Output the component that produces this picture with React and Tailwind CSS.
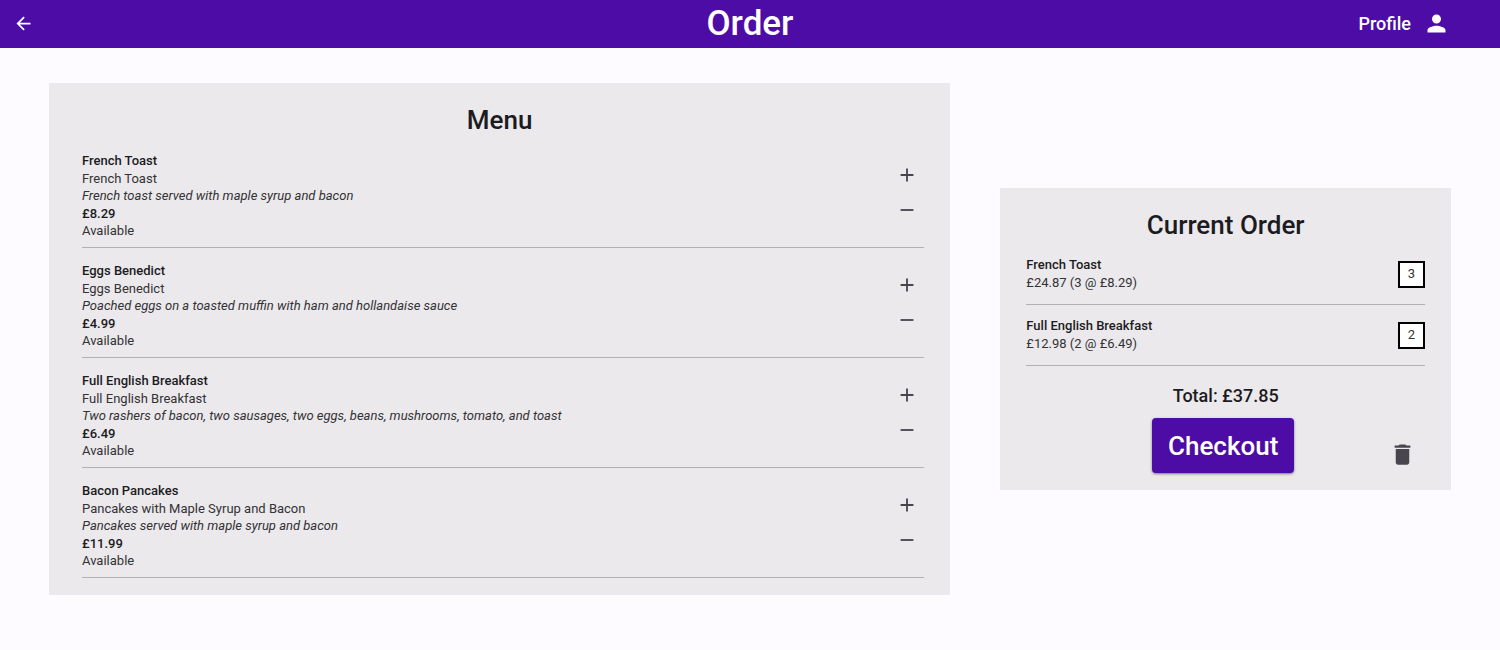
import { MdAdd, MdArrowBack, MdDelete, MdPerson, MdRemove } from "react-icons/md";

const menu = [
  {
    name: "French Toast",
    title: "French Toast",
    description: "French toast served with maple syrup and bacon",
    price: "£8.29",
  },
  {
    name: "Eggs Benedict",
    title: "Eggs Benedict",
    description: "Poached eggs on a toasted muffin with ham and hollandaise sauce",
    price: "£4.99",
  },
  {
    name: "Full English Breakfast",
    title: "Full English Breakfast",
    description: "Two rashers of bacon, two sausages, two eggs, beans, mushrooms, tomato, and toast",
    price: "£6.49",
  },
  {
    name: "Bacon Pancakes",
    title: "Pancakes with Maple Syrup and Bacon",
    description: "Pancakes served with maple syrup and bacon",
    price: "£11.99",
  },
];

const order = [
  { name: "French Toast", summary: "£24.87 (3 @ £8.29)", quantity: 3 },
  { name: "Full English Breakfast", summary: "£12.98 (2 @ £6.49)", quantity: 2 },
];

function Header() {
  return (
    <header className="grid h-12 grid-cols-[1fr_auto_1fr] items-center bg-[#4d0ca6] pb-px text-white">
      <button type="button" aria-label="Back" className="flex size-[47px] items-center justify-center">
        <MdArrowBack size={21} />
      </button>
      <h1 className="text-[35px] leading-[46px] font-medium">Order</h1>
      <button type="button" className="mr-[50px] flex items-center gap-3 justify-self-end text-[18px] font-medium">
        Profile
        <MdPerson size={27} />
      </button>
    </header>
  );
}

function MenuItem({ item }) {
  return (
    <li className="flex items-center justify-between border-b border-[#b3b1b4]">
      <div className="pt-[14px] pb-[7px]">
        <h3 className="leading-[18px] font-medium text-[#1c1b1f]">{item.name}</h3>
        <p className="leading-[17px]">{item.title}</p>
        <p className="leading-[18px] italic">{item.description}</p>
        <p className="leading-[17px] font-medium text-[#1c1b1f]">{item.price}</p>
        <p className="leading-[18px]">Available</p>
      </div>
      <div className="flex flex-col text-[#49454f]">
        <button type="button" aria-label={`Add ${item.name}`} className="flex size-[35px] items-center justify-center">
          <MdAdd size={22} />
        </button>
        <button type="button" aria-label={`Remove ${item.name}`} className="flex size-[35px] items-center justify-center">
          <MdRemove size={22} />
        </button>
      </div>
    </li>
  );
}

function OrderItem({ item }) {
  return (
    <li className="flex items-center justify-between border-b border-[#b3b1b4] py-3">
      <div className="leading-[18px]">
        <h3 className="font-medium text-[#1c1b1f]">{item.name}</h3>
        <p>{item.summary}</p>
      </div>
      <span className="flex size-[27px] items-center justify-center border-2 border-black bg-white">
        {item.quantity}
      </span>
    </li>
  );
}

export default function App() {
  return (
    <div className="min-h-screen bg-[#fdfbff] font-['Roboto',sans-serif] text-[13px] text-[#333236]">
      <Header />
      <main className="grid grid-cols-[2fr_1fr] items-center gap-[50px] px-[49px] py-[35px]">
        <section className="bg-[#ebe9eb] pb-[17px]">
          <h2 className="pt-[21px] pb-0.5 text-center text-[26px] leading-8 font-medium text-[#1c1b1f]">Menu</h2>
          <ul className="pr-[26px] pl-[33px]">
            {menu.map((item) => (
              <MenuItem key={item.name} item={item} />
            ))}
          </ul>
        </section>
        <section className="bg-[#ebe9eb] px-[26px] pb-[17px]">
          <h2 className="pt-[21px] pb-[3px] text-center text-[26px] leading-8 font-medium text-[#1c1b1f]">
            Current Order
          </h2>
          <ul>
            {order.map((item) => (
              <OrderItem key={item.name} item={item} />
            ))}
          </ul>
          <p className="pt-4 pb-2 text-center text-[18px] leading-7 font-medium text-[#1c1b1f]">Total: £37.85</p>
          <div className="grid grid-cols-[1fr_auto_1fr] items-center pr-[5px]">
            <button
              type="button"
              className="col-start-2 rounded bg-[#4d0ca6] px-4 pt-px text-[26px] leading-[54px] font-medium text-white shadow-sm shadow-black/40"
            >
              Checkout
            </button>
            <button
              type="button"
              aria-label="Clear order"
              className="mt-[18px] flex size-[34px] items-center justify-center justify-self-end text-[#49454f]"
            >
              <MdDelete size={27} />
            </button>
          </div>
        </section>
      </main>
    </div>
  );
}
